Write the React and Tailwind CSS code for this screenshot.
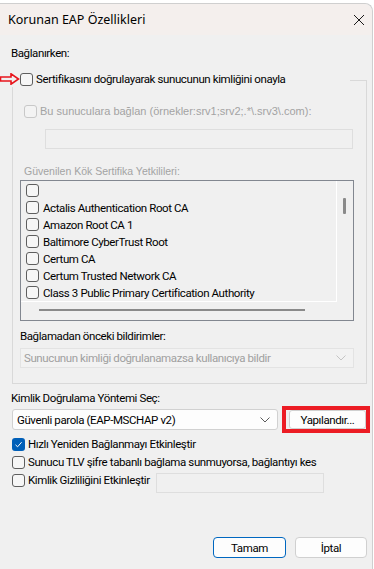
import React from "react";

const Check = ({ checked = false, disabled = false, className = "" }) => {
  if (checked) {
    return (
      <span className={`flex h-[13px] w-[13px] shrink-0 items-center justify-center rounded-[3px] bg-[#005fb8] ${className}`}>
        <svg width="9" height="9" viewBox="0 0 9 9">
          <path d="M1.5 4.8 L3.6 6.8 L7.6 2.2" fill="none" stroke="#ffffff" strokeWidth="1" />
        </svg>
      </span>
    );
  }
  return (
    <span
      className={`block h-[13px] w-[13px] shrink-0 rounded-[3px] border ${
        disabled ? "border-[#c8c8c8] bg-[#f3f3f3]" : "border-[#5e5e5e] bg-[#f6f6f6]"
      } ${className}`}
    />
  );
};

const Chevron = ({ color = "#606060" }) => (
  <svg width="10" height="6" viewBox="0 0 10 6">
    <path d="M0.5 0.5 L5 5 L9.5 0.5" fill="none" stroke={color} strokeWidth="1" />
  </svg>
);

const certs = [
  "",
  "Actalis Authentication Root CA",
  "Amazon Root CA 1",
  "Baltimore CyberTrust Root",
  "Certum CA",
  "Certum Trusted Network CA",
  "Class 3 Public Primary Certification Authority",
];

export default function App() {
  return (
    <div className="h-[569px] w-[374px] overflow-hidden bg-white font-['Roboto',sans-serif] text-[11.5px] leading-[16px] tracking-[-0.4px] text-black">
      <div className="mt-[3px] flex h-[566px] w-[373px] flex-col rounded-tr-[8px] border-r border-t border-[#cfcfcf] bg-[#f0f0f0]">
        {/* Title bar */}
        <div className="flex h-[31px] items-center justify-between rounded-tr-[8px] bg-[#f4efed] pl-[8px] pr-[6px]">
          <span className="font-['Noto_Sans',sans-serif] text-[12.5px] tracking-normal">Korunan EAP Özellikleri</span>
          <svg width="12" height="12" viewBox="0 0 12 12" className="mr-[1px]">
            <path d="M1 1 L11 11 M11 1 L1 11" stroke="#1a1a1a" strokeWidth="1" />
          </svg>
        </div>

        {/* Body */}
        <div className="flex flex-col pl-[12px]">
          <div className="mt-[10px] h-[16px]">
            <span className="-ml-[1px]">Bağlanırken:</span>
          </div>

          {/* Group box */}
          <div className="mt-[19px] flex w-[355px] flex-col border border-[#d9d9d9] pb-[15px]">
            <div className="-ml-[13px] -mt-[10px] flex h-[16px] w-[350px] items-center bg-[#f0f0f0]">
              <svg width="20" height="12" viewBox="0 0 20 12" className="shrink-0">
                <path
                  d="M0.5 4 L11 4 L11 0.8 L18.5 6 L11 11.2 L11 8 L0.5 8 Z"
                  fill="none"
                  stroke="#e8141c"
                  strokeWidth="1.6"
                  strokeLinejoin="miter"
                />
              </svg>
              <Check />
              <span className="ml-[3px] whitespace-nowrap">Sertifikasını doğrulayarak sunucunun kimliğini onayla</span>
            </div>

            <div className="mt-[16px] flex h-[16px] items-center pl-[11px] font-['Liberation_Sans',sans-serif] text-[11px] tracking-normal text-[#a3a3a3]">
              <Check disabled />
              <span className="ml-[3px] whitespace-nowrap">Bu sunuculara bağlan (örnekler:srv1;srv2;.*\.srv3\.com):</span>
            </div>

            <div className="ml-[32px] mt-[10px] h-[20px] w-[308px] border border-[#dedede] bg-[#f0f0f0]" />

            <div className="mt-[14px] flex h-[16px] items-center pl-[11px] font-['Liberation_Sans',sans-serif] text-[10.5px] tracking-normal text-[#a3a3a3]">
              Güvenilen Kök Sertifika Yetkilileri:
            </div>

            {/* List box */}
            <div className="ml-[7px] mt-[1px] flex h-[141px] w-[334px] flex-col border border-[#828790] bg-[#f0f0f0]">
              <div className="flex h-[121px]">
                <div className="flex w-[316px] flex-col border-b border-white pt-[1px]">
                  {certs.map((c, i) => (
                    <div key={i} className="flex h-[17px] items-center pl-[5px]">
                      <Check />
                      <span className="ml-[4px] whitespace-nowrap">{c}</span>
                    </div>
                  ))}
                </div>
                <div className="flex w-[17px] justify-center border-l border-white pt-[17px]">
                  <div className="ml-[-1px] h-[16px] w-[3px] rounded-[1px] bg-[#8a8a8a]" />
                </div>
              </div>
              <div className="flex flex-1 items-center pl-[18px]">
                <div className="mt-[-2px] h-[2px] w-[266px] bg-[#8a8a8a]" />
              </div>
            </div>

            <div className="mt-[7px] h-[16px] pl-[7px]">Bağlamadan önceki bildirimler:</div>

            <div className="ml-[7px] mt-[4px] flex h-[20px] w-[334px] items-center justify-between border border-[#e3e3e3] bg-[#f2f2f2] pl-[3px] pr-[7px] text-[#a0a0a0]">
              <span className="whitespace-nowrap">Sunucunun kimliği doğrulanamazsa kullanıcıya bildir</span>
              <Chevron color="#c4c4c4" />
            </div>
          </div>

          <div className="mt-[6px] h-[16px]">
            <span className="-ml-[1px]">Kimlik Doğrulama Yöntemi Seç:</span>
          </div>

          <div className="mt-[3px] flex h-[21px] items-center">
            <div className="flex h-[21px] w-[266px] items-center justify-between rounded-[3px] border border-[#d1d1d1] bg-[#fdfdfd] pl-[4px] pr-[7px]">
              <span className="whitespace-nowrap">Güvenli parola (EAP-MSCHAP v2)</span>
              <Chevron color="#5a5a5a" />
            </div>
            <div className="relative ml-[11px] flex h-[19px] w-[77px] items-center justify-center rounded-[3px] border border-[#d0d0d0] bg-[#fdfdfd]">
              <span className="whitespace-nowrap">Yapılandır...</span>
              <div className="absolute -bottom-[5px] -left-[8px] -right-[5px] -top-[5px] border-[4px] border-[#ec1c24]" />
            </div>
          </div>

          <div className="mt-[6px] flex h-[16px] items-center">
            <Check checked />
            <span className="ml-[3px] whitespace-nowrap">Hızlı Yeniden Bağlanmayı Etkinleştir</span>
          </div>
          <div className="mt-[2px] flex h-[16px] items-center">
            <Check />
            <span className="ml-[3px] whitespace-nowrap">Sunucu TLV şifre tabanlı bağlama sunmuyorsa, bağlantıyı kes</span>
          </div>
          <div className="mt-[2px] flex h-[21px] items-start">
            <div className="flex h-[16px] w-[144px] shrink-0 items-center">
              <Check />
              <span className="ml-[3px] whitespace-nowrap">Kimlik Gizliliğini Etkinleştir</span>
            </div>
            <div className="mt-[1px] h-[20px] w-[168px] border border-[#dedede] bg-[#f0f0f0]" />
          </div>

          <div className="mt-[44px] flex justify-end gap-[9px] pr-[5px]">
            <div className="flex h-[21px] w-[73px] items-center justify-center rounded-[4px] border border-[#0067c0] bg-[#fdfdfd]">
              Tamam
            </div>
            <div className="flex h-[21px] w-[72px] items-center justify-center rounded-[4px] border border-[#d0d0d0] bg-[#fdfdfd]">
              İptal
            </div>
          </div>
        </div>
      </div>
    </div>
  );
}
